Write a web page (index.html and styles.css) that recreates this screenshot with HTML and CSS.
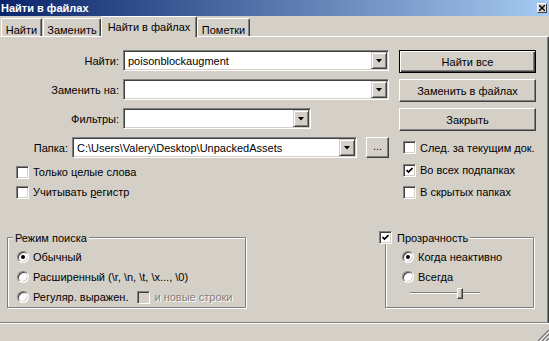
FILE: index.html
```html
<!DOCTYPE html>
<html lang="ru">
<head>
<meta charset="utf-8">
<title>Найти в файлах</title>
<link rel="stylesheet" href="styles.css">
</head>
<body>

<div class="win">

  <!-- ЗАГОЛОВОК ---------------------------------------------------------->
  <div class="caption">
    <span>Найти в файлах</span>
    <span class="xbtn">
      <svg width="6" height="6" viewBox="0 0 6 6"><path d="M0 0L6 6M6 0L0 6" stroke="#000" stroke-width="1.3"/></svg>
    </span>
  </div>

  <!-- ВКЛАДКИ ------------------------------------------------------------>
  <div class="tabs">
    <div class="tab t1">Найти</div>
    <div class="tab t2">Заменить</div>
    <div class="tab t3 active">Найти в файлах</div>
    <div class="tab t4">Пометки</div>
  </div>

  <div class="panel">
    <div class="top">

      <!-- поля слева -->
      <div class="form">
        <div class="row">
          <label class="lbl">Найти:</label>
          <div class="combo w-long"><span class="val">poisonblockaugment</span><span class="drop"></span></div>
        </div>
        <div class="row">
          <label class="lbl">Заменить на:</label>
          <div class="combo w-long"><span class="val"></span><span class="drop"></span></div>
        </div>
        <div class="row">
          <label class="lbl">Фильтры:</label>
          <div class="combo w-short"><span class="val"></span><span class="drop"></span></div>
        </div>
        <div class="row folder">
          <label class="lbl-folder">Папка:</label>
          <div class="combo w-folder"><span class="val">C:\Users\Valery\Desktop\UnpackedAssets</span><span class="drop"></span></div>
          <div class="btn dots">...</div>
        </div>

        <div class="checks">
          <div class="chk"><span class="box"></span><span>Только целые слова</span></div>
          <div class="chk"><span class="box"></span><span>Учитывать <u>р</u>егистр</span></div>
        </div>
      </div>

      <!-- кнопки справа -->
      <div class="side">
        <div class="btn def">Найти все</div>
        <div class="btn">Заменить в файлах</div>
        <div class="btn">Закрыть</div>

        <div class="side-checks">
          <div class="chk"><span class="box"></span><span>След. за текущим док.</span></div>
          <div class="chk"><span class="box"><svg width="7" height="7" viewBox="0 0 7 7"><path d="M0.5 3L2.5 5L6.5 1" fill="none" stroke="#000" stroke-width="1.7"/></svg></span><span>Во всех подпапках</span></div>
          <div class="chk"><span class="box"></span><span>В скрытых папках</span></div>
        </div>
      </div>
    </div>

    <!-- ГРУППЫ ------------------------------------------------------------>
    <div class="groups">
      <div class="group mode">
        <div class="legend">Режим поиска</div>
        <div class="opt"><span class="radio on"></span><span>Обычный</span></div>
        <div class="opt"><span class="radio"></span><span>Расширенный (\r, \n, \t, \x..., \0)</span></div>
        <div class="opt"><span class="radio"></span><span>Регуляр. выражен.</span><span class="box off"></span><span class="dim">и новые строки</span></div>
      </div>

      <div class="group trans">
        <div class="legend legend-chk"><span class="box"><svg width="7" height="7" viewBox="0 0 7 7"><path d="M0.5 3L2.5 5L6.5 1" fill="none" stroke="#000" stroke-width="1.7"/></svg></span><span>Прозрачность</span></div>
        <div class="opt"><span class="radio on"></span><span>Когда неактивно</span></div>
        <div class="opt"><span class="radio"></span><span>Всегда</span></div>
        <div class="slider"><span class="thumb"></span></div>
      </div>
    </div>
  </div>

  <!-- СТРОКА СОСТОЯНИЯ --------------------------------------------------->
  <div class="status">
    <svg width="12" height="12" viewBox="0 0 12 12">
      <path d="M12 1L1 12M12 5L5 12M12 9L9 12" stroke="#808080" stroke-width="1.5"/>
      <path d="M12 3L3 12M12 7L7 12M12 11L11 12" stroke="#fff" stroke-width="1"/>
    </svg>
  </div>
</div>

</body>
</html>
```

FILE: styles.css
```css
/* --------- ОБЩЕЕ --------- */
*{box-sizing:border-box;margin:0;padding:0}
body{
  background:#d4d0c8;
  font-family:"Liberation Sans",Arial,sans-serif;
  font-size:11px;
  color:#000;
}
.win{width:549px;height:341px;display:flex;flex-direction:column;overflow:hidden}

/* --------- ЗАГОЛОВОК --------- */
.caption{
  height:16px;
  display:flex;
  align-items:center;
  justify-content:space-between;
  padding:0 2px 0 1px;
  background:linear-gradient(90deg,#0a246a,#a6caf0);
  color:#fff;
  font-weight:bold;
}
.xbtn{
  width:10px;height:10px;
  display:flex;align-items:center;justify-content:center;
  background:#d4d0c8;
  border:1px solid;
  border-color:#fff #404040 #404040 #fff;
}

/* --------- ВКЛАДКИ --------- */
.tabs{
  height:21px;
  display:flex;
  align-items:flex-end;
  border-bottom:1px solid #fff;
  width:548px;
}
.tab{
  height:18px;
  padding-top:5px;
  text-align:center;
  border:1px solid;
  border-bottom:none;
  border-color:#fff #404040 transparent #fff;
  border-radius:2px 2px 0 0;
  box-shadow:inset -1px 0 0 #808080;
}
.t1{margin-left:1px;width:41px}
.t2{margin-left:1px;width:58px}
.t3{width:96px}
.t4{width:53px}
.tab.active{height:21px;padding-top:4px;margin-bottom:-1px;background:#d4d0c8}

/* --------- ПАНЕЛЬ --------- */
.panel{
  width:548px;
  height:286px;
  padding-top:13px;
  border-right:1px solid #808080;
  border-bottom:1px solid #808080;
  box-shadow:1px 0 0 #404040;
}
.top{display:flex}
.form{width:399px}
.row{display:flex;align-items:center;height:21px;margin-bottom:8px}
.row.folder{margin-bottom:4px}
.lbl{width:119px;text-align:right;margin-right:4px}
.lbl-folder{width:68px;text-align:right;margin-right:4px}

.combo{
  height:21px;
  display:flex;
  align-items:center;
  justify-content:space-between;
  padding:1px;
  background:#fff;
  border:1px solid;
  border-color:#808080 #fff #fff #808080;
  box-shadow:inset 1px 1px 0 #404040,inset -1px -1px 0 #d4d0c8;
}
.w-long{width:266px}
.w-short{width:188px}
.w-folder{width:285px}
.val{padding-left:3px;white-space:nowrap;overflow:hidden}
.drop{
  flex:none;
  width:16px;height:17px;
  display:flex;align-items:center;justify-content:center;
  background:#d4d0c8;
  border:1px solid;
  border-color:#d4d0c8 #404040 #404040 #d4d0c8;
  box-shadow:inset 1px 1px 0 #fff,inset -1px -1px 0 #808080;
}
.drop::after{
  content:"";
  width:7px;height:4px;
  background:#000;
  clip-path:polygon(0 0,100% 0,50% 100%);
}

/* --------- КНОПКИ --------- */
.btn{
  height:23px;
  display:flex;align-items:center;justify-content:center;
  margin-bottom:6px;
  border:1px solid;
  border-color:#fff #404040 #404040 #fff;
  box-shadow:inset -1px -1px 0 #808080;
}
.btn.def{
  border-color:#000;
  box-shadow:inset 1px 1px 0 #fff,inset -1px -1px 0 #404040,inset -2px -2px 0 #808080;
}
.btn.dots{width:23px;height:21px;margin:0 0 0 9px;padding-bottom:3px}
.side{width:137px;display:flex;flex-direction:column}

/* --------- ФЛАЖКИ --------- */
.checks{padding-left:16px}
.chk{display:flex;align-items:center;height:20px}
.box{
  flex:none;
  width:13px;height:13px;
  display:flex;align-items:center;justify-content:center;
  margin-right:4px;
  background:#fff;
  border:1px solid;
  border-color:#808080 #fff #fff #808080;
  box-shadow:inset 1px 1px 0 #404040,inset -1px -1px 0 #d4d0c8;
}
.box.off{background:#d4d0c8;margin-left:9px}
.side-checks{margin-top:-1px;padding-left:4px}
.side-checks .chk{height:22px}
.side-checks .chk:first-child{height:23px}
.dim{color:#808080;text-shadow:1px 1px 0 #fff}

/* --------- ГРУППЫ --------- */
.groups{display:flex;margin-top:34px}
.group{
  height:71px;
  border:1px solid #808080;
  box-shadow:inset 1px 1px 0 #fff,1px 1px 0 #fff;
}
.mode{width:239px;margin-left:7px;padding-left:9px}
.trans{width:149px;margin-left:139px;padding-left:16px}
.legend{
  display:flex;align-items:center;
  width:fit-content;
  height:13px;
  margin:-7px 0 3px -4px;
  padding:0 2px;
  background:#d4d0c8;
}
.legend-chk{margin-left:-23px;padding:0 2px 0 0}
.legend-chk .box{margin-right:5px}

.opt{display:flex;align-items:center;height:20px}
.radio{
  flex:none;
  width:12px;height:12px;
  display:flex;align-items:center;justify-content:center;
  margin-right:4px;
  border-radius:50%;
  background:#fff;
  border:1px solid;
  border-color:#808080 #fff #fff #808080;
  box-shadow:inset 1px 1px 0 #404040,inset -1px -1px 0 #d4d0c8;
}
.radio.on::after{content:"";width:4px;height:4px;border-radius:50%;background:#000}

/* ползунок */
.slider{
  display:flex;
  width:70px;height:11px;
  margin:1px 0 0 8px;
  background:linear-gradient(to bottom,transparent 4px,#808080 4px,#808080 5px,#fff 5px,#fff 6px,transparent 6px);
}
.thumb{
  width:6px;height:11px;
  margin-left:47px;
  background:#d4d0c8;
  border:1px solid;
  border-color:#fff #404040 #404040 #fff;
  box-shadow:inset -1px -1px 0 #808080;
}

/* --------- СТРОКА СОСТОЯНИЯ --------- */
.status{
  height:18px;
  display:flex;
  justify-content:flex-end;
  align-items:flex-end;
  border-top:1px solid #fff;
}
```
